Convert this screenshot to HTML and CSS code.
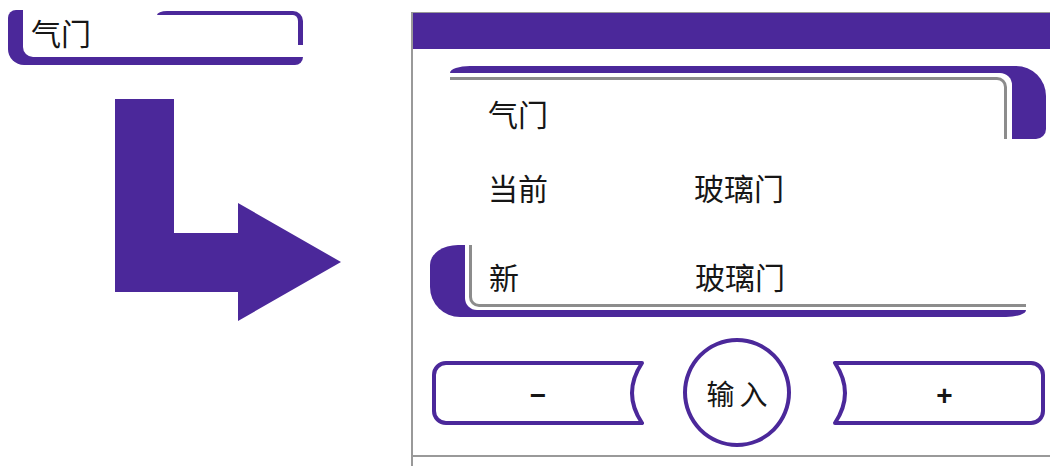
FILE: index.html
```html
<!DOCTYPE html>
<html lang="zh">
<head>
    <meta charset="UTF-8">
    <meta name="viewport" content="width=device-width, initial-scale=1.0">
    <title>气门</title>
    <link rel="stylesheet" href="styles.css">
</head>
<body>
    <div class="page">
        <div class="side">
            <div class="tag">
                <div class="tag-body">
                    <span class="tag-text">气门</span>
                    <span class="tag-bracket"></span>
                </div>
            </div>
            <svg class="arrow" width="226" height="222" viewBox="0 0 226 222">
                <polygon points="0,0 59,0 59,134 123,134 123,104 226,163 123,222 123,193 0,193"></polygon>
            </svg>
        </div>

        <div class="panel">
            <div class="panel-header"></div>

            <div class="card-top">
                <div class="card-top-inner">
                    <div class="card-top-line">
                        <span class="card-title">气门</span>
                    </div>
                </div>
            </div>

            <div class="field-row current">
                <span class="field-label">当前</span>
                <span class="field-value">玻璃门</span>
            </div>

            <div class="card-new">
                <div class="card-new-inner">
                    <div class="card-new-line">
                        <span class="field-label">新</span>
                        <span class="field-value">玻璃门</span>
                    </div>
                </div>
            </div>

            <div class="controls">
                <button class="step step-minus">
                    <svg width="212" height="64" viewBox="0 0 212 64">
                        <path d="M14 2 H210 Q190 32 210 62 H14 A12 12 0 0 1 2 50 V14 A12 12 0 0 1 14 2 Z"></path>
                    </svg>
                    <span class="step-label">−</span>
                </button>
                <button class="enter">输入</button>
                <button class="step step-plus">
                    <svg width="213" height="64" viewBox="0 0 213 64">
                        <path d="M3 2 H199 A12 12 0 0 1 211 14 V50 A12 12 0 0 1 199 62 H3 Q23 32 3 2 Z"></path>
                    </svg>
                    <span class="step-label">+</span>
                </button>
            </div>

            <div class="panel-footer"></div>
        </div>
    </div>
</body>
</html>
```

FILE: styles.css
```css
body {
    margin: 0;
    background-color: #ffffff;
    font-family: "Noto Sans CJK SC", "Noto Sans", sans-serif;
    color: #161616;
    overflow: hidden;
}
.page {
    display: flex;
    align-items: flex-start;
    height: 466px;
}

/* left side: small tag and arrow */
.side {
    width: 411px;
    flex-shrink: 0;
    padding: 10px 0 0 8px;
    box-sizing: border-box;
}
.tag {
    width: 295px;
    height: 55px;
    padding: 0 0 8px 15px;
    box-sizing: border-box;
    background-color: #4b289a;
    border-radius: 8px 0 8px 16px;
}
.tag-body {
    display: flex;
    align-items: flex-start;
    height: 100%;
    background-color: #ffffff;
    border-bottom-left-radius: 10px;
}
.tag-text {
    margin: 6px 0 0 8px;
    font-size: 30px;
    line-height: 32px;
}
.tag-bracket {
    margin: 1px 0 0 auto;
    width: 146px;
    height: 34px;
    box-sizing: border-box;
    border-top: 4px solid #4b289a;
    border-right: 5px solid #4b289a;
    border-top-right-radius: 10px;
    border-top-left-radius: 10px 4px;
}
.arrow {
    display: block;
    margin: 34px 0 0 107px;
    fill: #4b289a;
}

/* right panel */
.panel {
    flex: 1;
    margin-top: 12px;
    height: 454px;
    border-left: 2px solid #999999;
    border-top: 1px solid #999999;
}
.panel-header {
    height: 36px;
    background-color: #4b289a;
}

.card-top {
    width: 596px;
    height: 73px;
    margin: 17px 0 0 37px;
    padding: 7px 34px 0 0;
    box-sizing: border-box;
    background-color: #4b289a;
    border-radius: 20px 30px 10px 0 / 7px 30px 10px 0;
}
.card-top-inner {
    height: 100%;
    padding: 4px 5px 0 0;
    box-sizing: border-box;
    background-color: #ffffff;
    border-top-right-radius: 12px;
}
.card-top-line {
    height: 100%;
    padding: 17px 0 0 38px;
    box-sizing: border-box;
    border-top: 3px solid #8c8c8c;
    border-right: 3px solid #8c8c8c;
    border-top-right-radius: 10px;
}
.card-title,
.field-row,
.card-new-line {
    font-size: 30px;
    line-height: 32px;
}

.field-row {
    display: flex;
    margin: 32px 0 0 75px;
}
.field-label {
    width: 206px;
}

.card-new {
    width: 596px;
    height: 72px;
    margin: 42px 0 0 17px;
    padding: 0 0 7px 35px;
    box-sizing: border-box;
    background-color: #4b289a;
    border-radius: 28px 0 20px 30px / 20px 0 7px 30px;
}
.card-new-inner {
    height: 100%;
    padding: 0 0 3px 4px;
    box-sizing: border-box;
    background-color: #ffffff;
    border-bottom-left-radius: 12px;
}
.card-new-line {
    display: flex;
    height: 100%;
    padding: 15px 0 0 17px;
    box-sizing: border-box;
    border-left: 3px solid #8c8c8c;
    border-bottom: 3px solid #8c8c8c;
    border-bottom-left-radius: 10px;
}

/* buttons */
.controls {
    display: flex;
    align-items: center;
    margin: 21px 0 0 19px;
}
.step {
    display: grid;
    padding: 0;
    border: none;
    background: none;
    cursor: pointer;
}
.step > * {
    grid-area: 1 / 1;
}
.step svg {
    display: block;
}
.step path {
    fill: #ffffff;
    stroke: #4b289a;
    stroke-width: 4;
    stroke-linejoin: round;
}
.step-label {
    place-self: center;
    margin-top: 6px;
    font-family: "Liberation Sans", Arial, sans-serif;
    font-weight: bold;
    font-size: 28px;
    color: #161616;
}
.step-plus .step-label {
    margin-left: 12px;
}
.enter {
    width: 108px;
    height: 109px;
    margin: 0 41px 0 39px;
    padding: 0 0 0 5px;
    border: 4px solid #4b289a;
    border-radius: 50%;
    background-color: #ffffff;
    font-family: "Noto Sans CJK SC", sans-serif;
    font-size: 28px;
    letter-spacing: 5px;
    color: #161616;
    cursor: pointer;
}

.panel-footer {
    margin-top: 8px;
    border-top: 2px solid #999999;
}
```
